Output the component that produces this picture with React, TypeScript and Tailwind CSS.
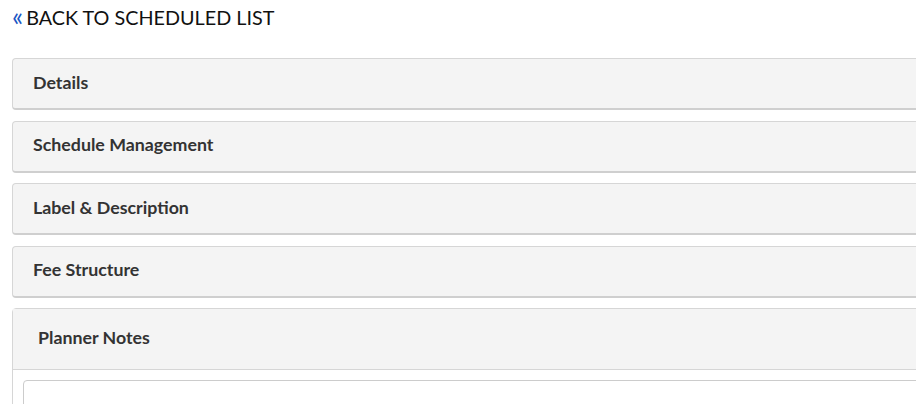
import React from "react";

const Panel = ({ title }: { title: string }) => (
  <div className="rounded-[4px] border border-[#d6d6d6] border-b-2 border-b-[#cfcfcf] bg-[#f4f4f4] h-[52px] flex items-center pl-[20px] mr-[-10px]">
    <span className="text-[17.8px] font-bold text-[#333] leading-none pb-[2px]">{title}</span>
  </div>
);

export default function App() {
  return (
    <div className="w-[916px] h-[404px] overflow-hidden bg-white pl-[12px]" style={{ fontFamily: "Lato, 'Open Sans', sans-serif" }}>
      <div className="h-[58px] pt-[3px]">
        <a className="flex items-center text-[19.8px] text-[#111] leading-[26px]">
          <span className="text-[#1a56c4] mr-[3px] text-[26px] leading-[26px] pb-[2px]">«</span>
          <span>BACK TO SCHEDULED LIST</span>
        </a>
      </div>
      <div className="flex flex-col gap-[10.5px]">
        <Panel title="Details" />
        <Panel title="Schedule Management" />
        <Panel title="Label & Description" />
        <Panel title="Fee Structure" />
        <div className="rounded-t-[4px] border border-[#d6d6d6] mr-[-10px]">
          <div className="h-[61px] bg-[#f4f4f4] border-b border-[#d6d6d6] flex items-center pl-[25px]">
            <span className="text-[17.8px] font-bold text-[#333] leading-none pb-[2px]">Planner Notes</span>
          </div>
          <div className="pt-[10px] pl-[10px]">
            <div className="h-[60px] rounded-[4px] border border-[#cccccc]" />
          </div>
        </div>
      </div>
    </div>
  );
}
